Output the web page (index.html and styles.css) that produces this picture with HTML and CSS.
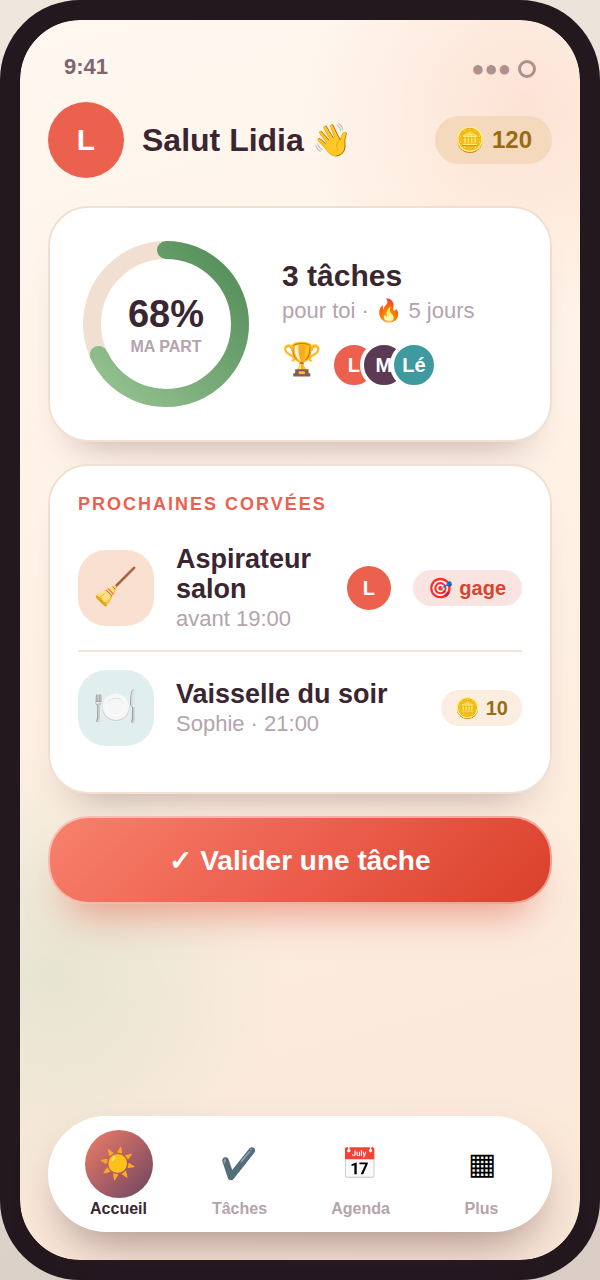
FILE: index.html
```html
<!DOCTYPE html>
<html lang="fr">
<head>
    <meta charset="utf-8">
    <meta name="viewport" content="width=device-width, initial-scale=1.0">
    <title>Accueil</title>
    <link rel="stylesheet" href="styles.css">
</head>
<body>
<div class="phone">
    <div class="status">
        <span class="time">9:41</span>
        <span class="signal">●●● <i class="ring-dot"></i></span>
    </div>

    <header class="header">
        <span class="avatar avatar-lg">L</span>
        <h1>Salut Lidia 👋</h1>
        <span class="coins">🪙 120</span>
    </header>

    <main class="content">
        <section class="card summary">
            <div class="ring">
                <svg viewBox="0 0 176 176" width="176" height="176">
                    <defs>
                        <linearGradient id="part" x1="0" y1="0" x2="1" y2="1">
                            <stop offset="0" stop-color="#98c593"/>
                            <stop offset="1" stop-color="#518b57"/>
                        </linearGradient>
                    </defs>
                    <circle class="track" cx="88" cy="88" r="74"/>
                    <!-- 68% de 2 x pi x 74 -->
                    <circle class="value" cx="88" cy="88" r="74" stroke="url(#part)" stroke-dasharray="316.2 465" transform="rotate(-90 88 88)"/>
                </svg>
                <div class="ring-text">
                    <strong>68%</strong>
                    <span>MA PART</span>
                </div>
            </div>
            <div class="summary-info">
                <h2>3 tâches</h2>
                <p class="sub">pour toi · 🔥 5 jours</p>
                <div class="podium">
                    <span class="trophy">🏆</span>
                    <div class="team">
                        <span class="avatar coral">L</span>
                        <span class="avatar plum">M</span>
                        <span class="avatar teal">Lé</span>
                    </div>
                </div>
            </div>
        </section>

        <section class="card chores">
            <h2 class="label">PROCHAINES CORVÉES</h2>
            <ul>
                <li>
                    <span class="icon peach">🧹</span>
                    <div class="chore">
                        <h3>Aspirateur salon</h3>
                        <p class="sub">avant 19:00</p>
                    </div>
                    <span class="avatar avatar-sm">L</span>
                    <span class="pill gage">🎯 gage</span>
                </li>
                <li>
                    <span class="icon mint">🍽️</span>
                    <div class="chore">
                        <h3>Vaisselle du soir</h3>
                        <p class="sub">Sophie · 21:00</p>
                    </div>
                    <span class="pill gold">🪙 10</span>
                </li>
            </ul>
        </section>

        <button type="button" class="cta">✓ Valider une tâche</button>
    </main>

    <nav class="tabs">
        <a href="#accueil" class="active"><span class="tab-icon">☀️</span>Accueil</a>
        <a href="#taches"><span class="tab-icon">✔️</span>Tâches</a>
        <a href="#agenda"><span class="tab-icon">📅</span>Agenda</a>
        <a href="#plus"><span class="tab-icon">▦</span>Plus</a>
    </nav>
</div>
</body>
</html>
```
FILE: styles.css
```css
*{
    box-sizing: border-box;
}
body{
    margin: 0;
    background: linear-gradient(160deg, #efe7de, #d9cdc5);
    color: #3a2631;
    font-family: "Liberation Sans", Arial, "Noto Color Emoji", sans-serif;
}
h1, h2, h3, p, ul{
    margin: 0;
    padding: 0;
}
ul{
    list-style: none;
}

.phone{
    display: flex;
    flex-direction: column;
    min-height: 100vh;
    padding: 28px;
    border: 20px solid #24181f;
    border-radius: 80px;
    background:
        radial-gradient(circle at 90% 7%, rgba(240,130,90,.16), rgba(240,130,90,0) 220px) padding-box,
        radial-gradient(circle at 6% 77%, rgba(140,195,150,.2), rgba(140,195,150,0) 230px) padding-box,
        linear-gradient(165deg, #fff7f0 0%, #fff3e7 35%, #fae7d7 100%) padding-box,
        #24181f;
}

.status{
    display: flex;
    justify-content: space-between;
    align-items: center;
    padding: 2px 16px 0;
    height: 36px;
    font-size: 22px;
    font-weight: bold;
    color: #7e6570;
}
.signal{
    display: flex;
    align-items: center;
    gap: 7px;
    padding-top: 3px;
    color: #b18f8c;
}
.ring-dot{
    width: 18px;
    height: 18px;
    border: 3px solid #b18f8c;
    border-radius: 50%;
}

.header{
    display: flex;
    align-items: center;
    gap: 18px;
    margin: 18px 0 28px;
}
.header h1{
    flex: 1;
    font-size: 32px;
    line-height: 36px;
}
.avatar{
    display: flex;
    align-items: center;
    justify-content: center;
    flex: none;
    border-radius: 50%;
    background: #ec604e;
    color: #fff;
    font-size: 20px;
    font-weight: bold;
}
.avatar-lg{
    width: 76px;
    height: 76px;
    font-size: 30px;
}
.avatar-sm{
    width: 44px;
    height: 44px;
}
.coins{
    padding: 0 20px;
    border-radius: 24px;
    background: #f5d9bd;
    color: #9a6a14;
    font-size: 24px;
    font-weight: bold;
    line-height: 48px;
}

.content{
    display: flex;
    flex-direction: column;
    gap: 22px;
}
.card{
    padding: 28px;
    border: 2px solid #f1e0d1;
    border-radius: 40px;
    background: #fff;
    box-shadow: 0 28px 40px -28px rgba(80,45,55,.4);
}
.sub{
    margin-top: 2px;
    color: #b5a3ad;
    font-size: 22px;
    line-height: 26px;
}

.summary{
    display: flex;
    align-items: center;
    gap: 28px;
}
.ring{
    display: grid;
    flex: none;
}
.ring svg, .ring-text{
    grid-area: 1 / 1;
}
.ring circle{
    fill: none;
    stroke-width: 18;
}
.track{
    stroke: #f1e0d1;
}
.value{
    stroke-linecap: round;
}
.ring-text{
    display: flex;
    flex-direction: column;
    align-items: center;
    justify-content: center;
    padding-top: 2px;
}
.ring-text strong{
    font-size: 38px;
    line-height: 44px;
}
.ring-text span{
    color: #b5a3ad;
    font-size: 16px;
    font-weight: bold;
    line-height: 22px;
}
.summary-info h2{
    font-size: 30px;
    line-height: 34px;
}
.summary-info .sub{
    margin-top: 5px;
}
.podium{
    display: flex;
    align-items: flex-start;
    gap: 8px;
    margin-top: 17px;
}
.trophy{
    font-size: 32px;
    line-height: 36px;
}
.team{
    display: flex;
}
.team .avatar{
    width: 48px;
    height: 48px;
    border: 4px solid #fff;
}
.team .avatar + .avatar{
    margin-left: -18px;
}
.team .plum{
    background: #5c3a54;
}
.team .teal{
    background: #3f9a9f;
}

.label{
    margin-bottom: 12px;
    color: #ec604e;
    font-size: 18px;
    letter-spacing: 2px;
    line-height: 20px;
}
.chores li{
    display: flex;
    align-items: center;
    gap: 22px;
    padding: 18px 0;
}
.chores li + li{
    border-top: 2px solid #f1e4d8;
}
.icon{
    flex: none;
    width: 76px;
    border-radius: 28px;
    font-size: 36px;
    line-height: 74px;
    padding-bottom: 2px;
    text-align: center;
}
.peach{
    background: #f9e0d0;
}
.mint{
    background: #e0eeed;
}
.chore{
    flex: 1;
}
.chore h3{
    font-size: 27px;
    line-height: 30px;
}
.pill{
    padding: 0 14px;
    border-radius: 18px;
    font-size: 20px;
    font-weight: bold;
    line-height: 36px;
}
.gage{
    padding: 0 16px;
    background: #fae4e2;
    color: #d9432f;
}
.gold{
    background: #fbeee0;
    color: #9a6a14;
}

.cta{
    height: 88px;
    border: 2px solid rgba(255,255,255,.5);
    border-radius: 40px;
    background: linear-gradient(135deg, #f7826c, #ec5f4d 50%, #d9402a) border-box;
    box-shadow: 0 28px 40px -20px rgba(220,80,60,.55);
    color: #fff;
    font-family: inherit;
    font-size: 28px;
    font-weight: bold;
}

.tabs{
    display: flex;
    margin-top: auto;
    padding: 14px 10px;
    border-radius: 58px;
    background: #fff;
    box-shadow: 0 24px 48px -16px rgba(80,35,50,.5);
}
.tabs a{
    display: flex;
    flex: 1;
    flex-direction: column;
    align-items: center;
    gap: 2px;
    color: #b5a3ad;
    font-size: 16px;
    font-weight: bold;
    line-height: 18px;
    text-decoration: none;
}
.tabs .active{
    color: #3a2631;
}
.tab-icon{
    width: 68px;
    border-radius: 50%;
    color: #000;
    font-size: 30px;
    font-weight: normal;
    line-height: 68px;
    text-align: center;
}
.active .tab-icon{
    background: linear-gradient(135deg, #f07d69, #6c4460);
}
```
